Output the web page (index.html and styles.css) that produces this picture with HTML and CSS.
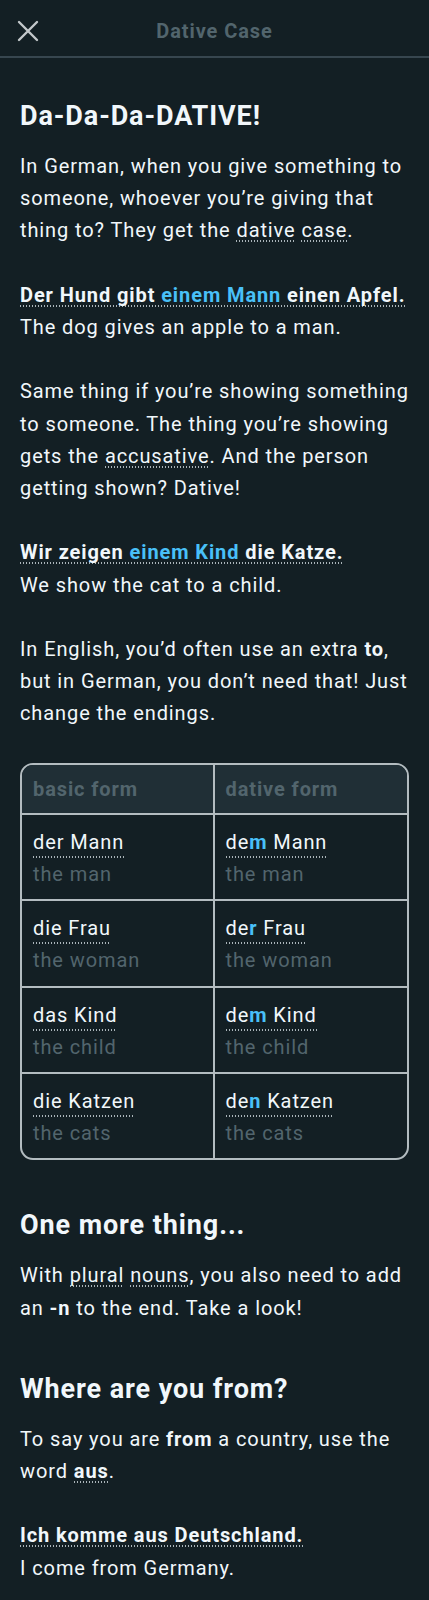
FILE: index.html
```html
<!DOCTYPE html>
<html lang="en">
<head>
<meta charset="utf-8">
<title>Dative Case</title>
<link rel="stylesheet" href="styles.css">
</head>
<body>
<header class="topbar">
  <button class="close" aria-label="Close">
    <svg width="22" height="22" viewBox="0 0 22 22"><path d="M2 2 L20 20 M20 2 L2 20" stroke="#c3c8cb" stroke-width="2.4" stroke-linecap="round" fill="none"/></svg>
  </button>
  <h1 class="title">Dative Case</h1>
</header>
<main class="content">
  <h2 class="heading first">Da-Da-Da-DATIVE!</h2>
  <p>In German, when you give something to someone, whoever you’re giving that thing to? They get the <span class="u">dative</span> <span class="u">case</span>.</p>
  <p><span class="u b">Der Hund gibt <span class="blue">einem Mann</span> einen Apfel.</span><br>The dog gives an apple to a man.</p>
  <p>Same thing if you’re showing something to someone. The thing you’re showing gets the <span class="u">accusative</span>. And the person getting shown? Dative!</p>
  <p><span class="u b">Wir zeigen <span class="blue">einem Kind</span> die Katze.</span><br>We show the cat to a child.</p>
  <p>In English, you’d often use an extra <b>to</b>, but in German, you don’t need that! Just change the endings.</p>

  <div class="table">
    <div class="cell head left">basic form</div>
    <div class="cell head">dative form</div>

    <div class="cell left"><span class="u">der Mann</span><span class="tr">the man</span></div>
    <div class="cell"><span class="u">de<b class="blue">m</b> Mann</span><span class="tr">the man</span></div>

    <div class="cell left"><span class="u">die Frau</span><span class="tr">the woman</span></div>
    <div class="cell"><span class="u">de<b class="blue">r</b> Frau</span><span class="tr">the woman</span></div>

    <div class="cell left"><span class="u">das Kind</span><span class="tr">the child</span></div>
    <div class="cell"><span class="u">de<b class="blue">m</b> Kind</span><span class="tr">the child</span></div>

    <div class="cell left last"><span class="u">die Katzen</span><span class="tr">the cats</span></div>
    <div class="cell last"><span class="u">de<b class="blue">n</b> Katzen</span><span class="tr">the cats</span></div>
  </div>

  <h2 class="heading">One more thing...</h2>
  <p>With <span class="u">plural</span> <span class="u">nouns</span>, you also need to add an <b class="nw">-n</b> to the end. Take a look!</p>

  <h2 class="heading">Where are you from?</h2>
  <p>To say you are <b>from</b> a country, use the word <span class="u b">aus</span>.</p>
  <p><span class="u b">Ich komme aus Deutschland.</span><br>I come from Germany.</p>
</main>
</body>
</html>
```

FILE: styles.css
```css
* { box-sizing: border-box; }
html, body {
  margin: 0;
  background: #131f24;
}
body {
  font-family: Roboto, "Noto Sans", sans-serif;
  color: #f1f7fb;
  font-size: 20px;
  line-height: 32.2px;
  letter-spacing: 0.9px;
}
.topbar {
  position: relative;
  height: 58px;
  padding-top: 6px;
  border-bottom: 2px solid #37464f;
  display: flex;
  align-items: center;
  justify-content: center;
}
.close {
  position: absolute;
  left: 17px;
  top: 20px;
  width: 22px;
  height: 22px;
  padding: 0;
  border: 0;
  background: none;
  display: block;
}
.close svg { display: block; }
.title {
  margin: 0;
  font-size: 20px;
  font-weight: 700;
  color: #52656d;
  line-height: 24px;
  letter-spacing: 0.9px;
}
.content {
  padding: 0 20px 40px;
}
.heading {
  margin: 47px 0 16px;
  font-size: 27px;
  line-height: 36px;
  font-weight: 700;
  letter-spacing: 0.9px;
}
.heading.first { margin-top: 40px; }
p { margin: 0 0 32.2px; }
b, .b { font-weight: 700; }
.nw { white-space: nowrap; }
.blue { color: #49c0f8; }
.u {
  background-image: linear-gradient(to right, #aab4b9 50%, transparent 50%);
  background-size: 3px 2px;
  background-repeat: repeat-x;
  background-position: 0 100%;
}
.table {
  display: grid;
  grid-template-columns: 1fr 1fr;
  border: 2px solid #b3bcc0;
  border-radius: 13px;
  overflow: hidden;
  margin-top: 33px;
}
.cell {
  padding: 11px 11px 9px;
  border-bottom: 2px solid #b3bcc0;
  display: flex;
  flex-direction: column;
  align-items: flex-start;
}
.cell.left { border-right: 2px solid #b3bcc0; }
.cell.last { border-bottom: 0; }
.cell.head {
  background: #202f36;
  color: #52656d;
  font-weight: 700;
  padding: 8px 11px;
}
.tr { color: #52656d; }
```
